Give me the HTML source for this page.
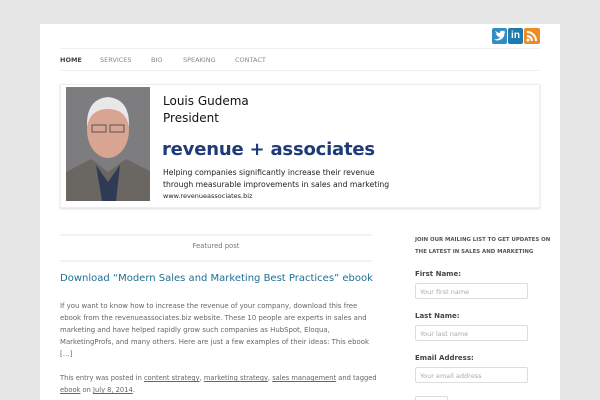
<!DOCTYPE html>
<html><head><meta charset="utf-8"><style>
*{margin:0;padding:0;box-sizing:border-box}
html,body{width:600px;height:400px;overflow:hidden}
body{background:#e6e6e6;font-family:"DejaVu Sans","Liberation Sans",sans-serif;position:relative}
#wrap{position:absolute;left:40px;top:24px;width:520px;height:376px;background:#fff;overflow:hidden}
.a{position:absolute;white-space:nowrap}
.nav{font-size:6.5px;color:#888;top:32px}
.lbl{font-size:7px;font-weight:bold;color:#444;left:375px}
.inp{position:absolute;left:375px;width:113px;height:16px;border:1px solid #ddd;border-radius:2px;font-size:6.5px;color:#aaa;padding:4px 4px}
.body{font-size:6.9px;color:#666;left:20px}
u{color:#666}
</style></head><body>
<div id="wrap">
 <div class="a" style="left:452px;top:4px;width:15px;height:16px;background:#2f8fc4;border-radius:2px"><svg width="15" height="16"><path d="M2 11 Q6 12 8 9 Q5 9 5 7 Q4 7 3.5 6 Q5 6 4.5 5 Q3 4 3.5 3 Q6 5 8 5 Q8 2 11 3 L13 2.5 L12 4 L13.5 3.8 L12.5 5 Q12.5 11 6 12.5 Q3.5 12.5 2 11Z" fill="#fff"/></svg></div>
 <div class="a" style="left:468px;top:4px;width:15px;height:16px;background:#1f7ab0;border-radius:2px;color:#fff;font-size:10px;font-weight:bold;text-align:center;line-height:16px;font-family:'Liberation Sans'">in</div>
 <div class="a" style="left:484px;top:4px;width:16px;height:16px;background:#f08a24;border-radius:2px"><svg width="16" height="16"><circle cx="4" cy="12" r="1.6" fill="#fff"/><path d="M3 8a5 5 0 0 1 5 5M3 4a9 9 0 0 1 9 9" stroke="#fff" stroke-width="2" fill="none"/></svg></div>
 <div class="a" style="left:20px;top:24px;width:480px;border-top:1px solid #eee"></div>
 <div class="a" style="left:20px;top:46px;width:480px;border-top:1px solid #eee"></div>
 <div class="a nav" style="left:20px;color:#444;font-weight:bold">HOME</div>
 <div class="a nav" style="left:60px">SERVICES</div>
 <div class="a nav" style="left:111px">BIO</div>
 <div class="a nav" style="left:143px">SPEAKING</div>
 <div class="a nav" style="left:195px">CONTACT</div>
 <div class="a" style="left:20px;top:60px;width:480px;height:124px;border:1px solid #eee;box-shadow:0 1px 2px #ddd"></div>
 <svg class="a" style="left:26px;top:63px" width="84" height="114">
  <rect width="84" height="114" fill="#7d7d80"/>
  <path d="M0 85 L25 72 L42 85 L60 72 L84 84 V114 H0Z" fill="#6a6763"/>
  <path d="M30 78 L42 95 L54 78 L50 114 H36Z" fill="#2f3a55"/>
  <ellipse cx="42" cy="43" rx="21" ry="28" fill="#d9a592"/>
  <path d="M21 40 Q20 12 42 10 Q64 12 63 40 Q60 22 42 22 Q24 22 21 40Z" fill="#e8e8e8"/>
  <rect x="26" y="38" width="14" height="7" fill="none" stroke="#555" stroke-width="1"/>
  <rect x="44" y="38" width="14" height="7" fill="none" stroke="#555" stroke-width="1"/>
 </svg>
 <div class="a" style="left:123px;top:69px;font-size:12px;color:#111;line-height:17px">Louis Gudema<br>President</div>
 <div class="a" style="left:122px;top:115px;font-size:18px;color:#1e3b78;font-weight:bold;letter-spacing:-0.2px">revenue + associates</div>
 <div class="a" style="left:123px;top:143px;font-size:7.7px;color:#222;line-height:12px">Helping companies significantly increase their revenue<br>through measurable improvements in sales and marketing</div>
 <div class="a" style="left:123px;top:168px;font-size:6.5px;color:#222">www.revenueassociates.biz</div>
 <div class="a" style="left:20px;top:210px;width:312px;border-top:2px solid #f2f2f2"></div>
 <div class="a" style="left:20px;top:218px;width:312px;text-align:center;font-size:6.8px;color:#777">Featured post</div>
 <div class="a" style="left:20px;top:236px;width:312px;border-top:2px solid #f2f2f2"></div>
 <div class="a" style="left:20px;top:249px;font-size:10px;color:#1f6e93">Download “Modern Sales and Marketing Best Practices” ebook</div>
 <div class="a body" style="top:276px;line-height:12px">If you want to know how to increase the revenue of your company, download this free<br>ebook from the revenueassociates.biz website. These 10 people are experts in sales and<br>marketing and have helped rapidly grow such companies as HubSpot, Eloqua,<br>MarketingProfs, and many others. Here are just a few examples of their ideas: This ebook<br>[…]</div>
 <div class="a body" style="top:348px;line-height:12px;font-size:6.7px">This entry was posted in <u>content strategy</u>, <u>marketing strategy</u>, <u>sales management</u> and tagged<br><u>ebook</u> on <u>July 8, 2014</u>.</div>
 <div class="a" style="left:375px;top:210px;font-size:5.4px;font-weight:bold;color:#555;line-height:12px">JOIN OUR MAILING LIST TO GET UPDATES ON<br>THE LATEST IN SALES AND MARKETING</div>
 <div class="a lbl" style="top:246px">First Name:</div>
 <div class="inp" style="top:259px">Your first name</div>
 <div class="a lbl" style="top:288px">Last Name:</div>
 <div class="inp" style="top:301px">Your last name</div>
 <div class="a lbl" style="top:330px">Email Address:</div>
 <div class="inp" style="top:343px">Your email address</div>
 <div class="a" style="left:375px;top:372px;width:33px;height:10px;border:1px solid #ddd;border-radius:2px"></div>
</div>
</body></html>
